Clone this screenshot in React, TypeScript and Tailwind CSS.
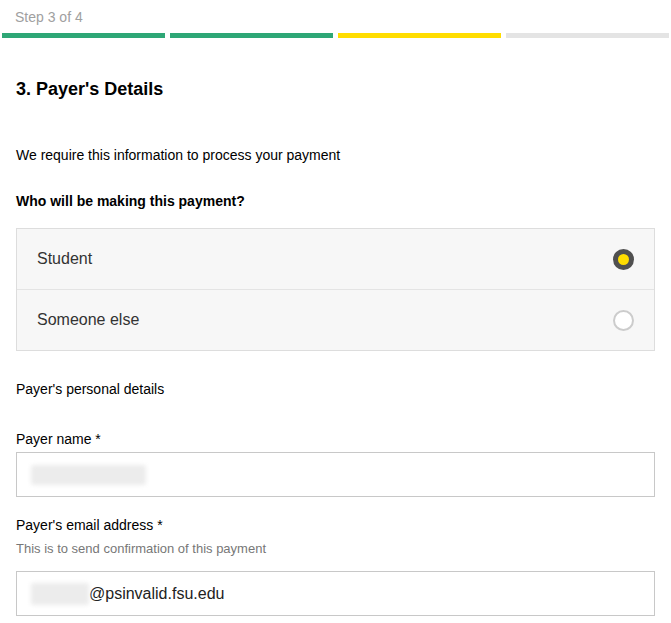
import React from 'react';

const STEPS = ['bg-[#2ea776]', 'bg-[#2ea776]', 'bg-[#ffdd00]', 'bg-[#e4e4e4]'];

function Radio({ checked }: { checked: boolean }) {
  if (checked) {
    return (
      <span className="flex h-[21px] w-[21px] items-center justify-center rounded-full bg-[#505050]">
        <span className="h-[11px] w-[11px] rounded-full bg-[#ffdd00]" />
      </span>
    );
  }
  return <span className="h-[21px] w-[21px] rounded-full border-2 border-[#cccccc] bg-white" />;
}

export default function App() {
  return (
    <div className="min-h-screen bg-white font-['Liberation_Sans',Arial,sans-serif] text-[#0b0c0c]">
      <div className="px-[15px] pt-[7px] text-[14px] leading-[20px] text-[#a0a0a0]">Step 3 of 4</div>
      <div className="mt-[6px] flex gap-[5px] px-[2px]">
        {STEPS.map((c, i) => (
          <div key={i} className={`h-[5px] flex-1 ${c}`} />
        ))}
      </div>

      <div className="px-[16px]">
        <h1 className="mt-[40px] text-[18px] font-bold leading-[22px] text-black">3. Payer's Details</h1>

        <p className="mt-[45px] text-[14px] leading-[20px] text-black">We require this information to process your payment</p>
        <p className="mt-[26px] text-[14px] font-bold leading-[20px] text-black">Who will be making this payment?</p>

        <div className="mt-[17px] border border-[#dddddd] bg-[#f7f7f7]">
          <div className="flex h-[61px] items-center justify-between border-b border-[#e4e4e4] pl-[20px] pr-[20px]">
            <span className="text-[16px] text-[#333333]">Student</span>
            <Radio checked />
          </div>
          <div className="flex h-[60px] items-center justify-between pl-[20px] pr-[20px]">
            <span className="text-[16px] text-[#333333]">Someone else</span>
            <Radio checked={false} />
          </div>
        </div>

        <p className="mt-[28px] text-[14px] leading-[20px] text-black">Payer's personal details</p>

        <label className="mt-[30px] block text-[14px] leading-[20px] text-black">Payer name *</label>
        <div className="mt-[3px] flex h-[45px] items-center border border-[#c8c8c8] bg-white pl-[14px]">
          <span className="h-[20px] w-[115px] rounded-[3px] bg-[#ececec] blur-[2px]" />
        </div>

        <label className="mt-[18px] block text-[14px] leading-[20px] text-black">Payer's email address *</label>
        <p className="mt-[6px] text-[13px] leading-[16px] text-[#777777]">This is to send confirmation of this payment</p>
        <div className="mt-[14px] flex h-[45px] items-center border border-[#c8c8c8] bg-white pl-[14px]">
          <span className="h-[22px] w-[58px] rounded-[2px] bg-[#ececec] blur-[2px]" />
          <span className="text-[16px] text-[#222222]">@psinvalid.fsu.edu</span>
        </div>
      </div>
    </div>
  );
}
